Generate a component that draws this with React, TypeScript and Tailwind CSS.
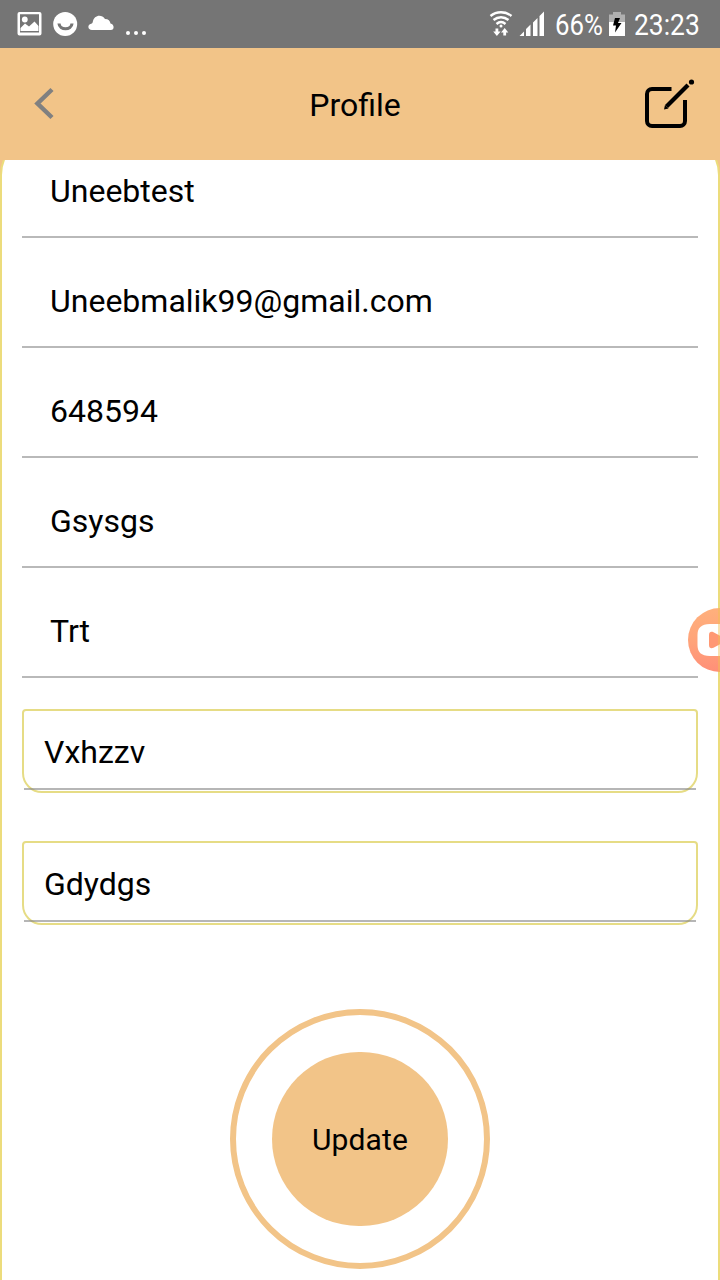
const fields = ["Uneebmalik99@gmail.com", "648594", "Gsysgs", "Trt"];
const boxes = ["Vxhzzv", "Gdydgs"];

function StatusBar() {
  return (
    <div className="flex h-12 shrink-0 items-center bg-[#757575] text-white">
      <svg className="ml-[16px] h-12 w-[134px]" viewBox="16 0 134 48" fill="currentColor">
        <path
          fillRule="evenodd"
          d="M19.500 12h20a2 2 0 0 1 2 2v19.500a2 2 0 0 1-2 2h-20a2 2 0 0 1-2-2V14a2 2 0 0 1 2-2Zm.5 2.200v18.300h19V14.200Z"
        />
        <circle cx="24.800" cy="19.500" r="2.900" />
        <path d="M20.500 31v-3l4.500-4.500 4 3 5.500-5 4 4.500v5Z" />
        <circle cx="65.200" cy="24" r="12" />
        <path d="M59 23.500c.5 7 12.500 7 13 0" fill="none" stroke="#757575" strokeWidth="3.200" />
        <path d="M92 30c-4.500 0-4.800-5.500-.8-6.200.8-.2 1.200-.6 1.500-1.500 1.300-7.500 9-8.300 12.300-3.200 3.500 0 5 2 5.500 4.300 4 .7 4.200 6.600.3 6.600Z" />
        <circle cx="128" cy="33" r="2" />
        <circle cx="136" cy="33" r="2" />
        <circle cx="144" cy="33" r="2" />
      </svg>
      <svg className="ml-[336px] h-12 w-[64px]" viewBox="486 0 64 48" fill="currentColor">
        <g fill="none" stroke="currentColor" strokeWidth="2.400">
          <path d="M490.500 16c6-5 15-5 21 0" />
          <path d="M493.500 20c4.500-3.700 10.500-3.700 15 0" />
          <path d="M496.500 24c2.700-2.300 6.300-2.300 9 0" />
        </g>
        <circle cx="501" cy="26" r="1.500" />
        <path d="M495.500 28.500h2.800v3h2.300l-3.700 4.500-3.700-4.500h2.300Z" />
        <path d="M503.300 35.500h2.800v-3h2.200l-3.600-4.500-3.700 4.500h2.300Z" />
        <path d="M519.500 36l4.500-4.500V36ZM526 36v-7l4.500-4.500V36ZM533 36V22.500l4.500-4.500V36ZM539.500 36V16l4.500-4.500V36Z" />
      </svg>
      <span className="ml-[5px] w-[53px] origin-left scale-x-[0.86] pt-[2px] font-[Roboto,sans-serif] text-[30px] leading-[46px] whitespace-nowrap">
        66%
      </span>
      <svg className="ml-px h-12 w-[16px]" viewBox="609 0 16 48">
        <path d="M613 12h8v2.500h4V22h-16v-7.500h4Z" fill="#b0b0b0" />
        <path d="M609 22h16v14h-16Z" fill="#fff" />
        <path d="M615 18h5l-2 5h3.500l-6.500 9.500 1-7h-3Z" fill="#000" />
      </svg>
      <span className="ml-[9px] origin-left scale-x-[0.88] pt-[2px] font-[Roboto,sans-serif] text-[30px] leading-[46px] whitespace-nowrap">
        23:23
      </span>
    </div>
  );
}

function Header() {
  return (
    <header className="flex h-28 shrink-0 items-center justify-between bg-[#f2c488]">
      <svg className="ml-[30px] h-10 w-[30px]" viewBox="30 84 30 40" fill="none">
        <path d="M52 89.500L37.500 103.500L52 117.500" stroke="#808080" strokeWidth="4.500" />
      </svg>
      <h1 className="ml-[10px] pt-[2px] text-[32px] leading-[38px]">Profile</h1>
      <svg className="mr-[20px] h-[56px] w-[60px]" viewBox="640 76 60 56" fill="none" stroke="#000">
        <path d="M671.500 89H652a5 5 0 0 0-5 5v27a5 5 0 0 0 5 5h28a5 5 0 0 0 5-5V100" strokeWidth="4" />
        <path d="M666.500 106.500L688 85" strokeWidth="4.300" />
        <path d="M664 109.500l1-4.500 3.500 3.500Z" fill="#000" stroke="none" />
        <circle cx="691.500" cy="82" r="2.600" fill="#000" stroke="none" />
      </svg>
    </header>
  );
}

export default function App() {
  return (
    <div className="relative flex h-[1280px] w-[720px] flex-col overflow-hidden bg-[#f2c488] font-[Roboto,sans-serif] text-black">
      <StatusBar />
      <Header />
      <main className="min-h-0 flex-1 overflow-hidden">
        <div className="-mt-[25px] h-[1300px] rounded-t-[40px] border-2 border-[#ecdc7c] bg-white px-5 pt-[23px]">
          <div className="h-[78px] border-b-2 border-[#b9b9b9] pl-7 text-[32px] leading-[62px]">
            Uneebtest
          </div>
          {fields.map((value) => (
            <div
              key={value}
              className="h-[110px] border-b-2 border-[#b9b9b9] pt-[32px] pl-7 text-[32px] leading-[62px]"
            >
              {value}
            </div>
          ))}
          <div className="mt-[31px] flex flex-col gap-12">
            {boxes.map((value) => (
              <div
                key={value}
                className="h-[84px] rounded-t-[4px] rounded-b-[20px] border-2 border-[#e6dc85]"
              >
                <div className="h-[79px] border-b-2 border-[#858585]/60 pl-5 text-[32px] leading-[82px]">
                  {value}
                </div>
              </div>
            ))}
          </div>
          <div className="mx-auto mt-[84px] flex size-[260px] items-center justify-center rounded-full border-6 border-[#f2c488]">
            <button className="h-[174px] w-[176px] rounded-full bg-[#f2c488] text-[30px] tracking-[0.1px]">
              Update
            </button>
          </div>
        </div>
      </main>
      <svg className="absolute top-[608px] right-0 h-16 w-8" viewBox="0 0 32 64">
        <defs>
          <linearGradient id="bubble" x1="0" y1="0" x2="0" y2="1">
            <stop offset="0" stopColor="#ffb07c" />
            <stop offset="0.500" stopColor="#ffa47a" />
            <stop offset="1" stopColor="#ff8f78" />
          </linearGradient>
        </defs>
        <circle cx="32" cy="32" r="32" fill="url(#bubble)" />
        <path d="M32 16H22c-9 0-12.500 4-12.500 11v10c0 7 3.500 11 12.500 11h10Z" fill="#fff" />
        <path d="M21 27c0-3 2-4 4.500-2.800l14 7.800-14 7.800c-2.500 1.200-4.500.2-4.500-2.800Z" fill="#ff9873" />
        <path d="M30 0h2v64h-2Z" fill="#f0c050" opacity="0.450" />
      </svg>
    </div>
  );
}
